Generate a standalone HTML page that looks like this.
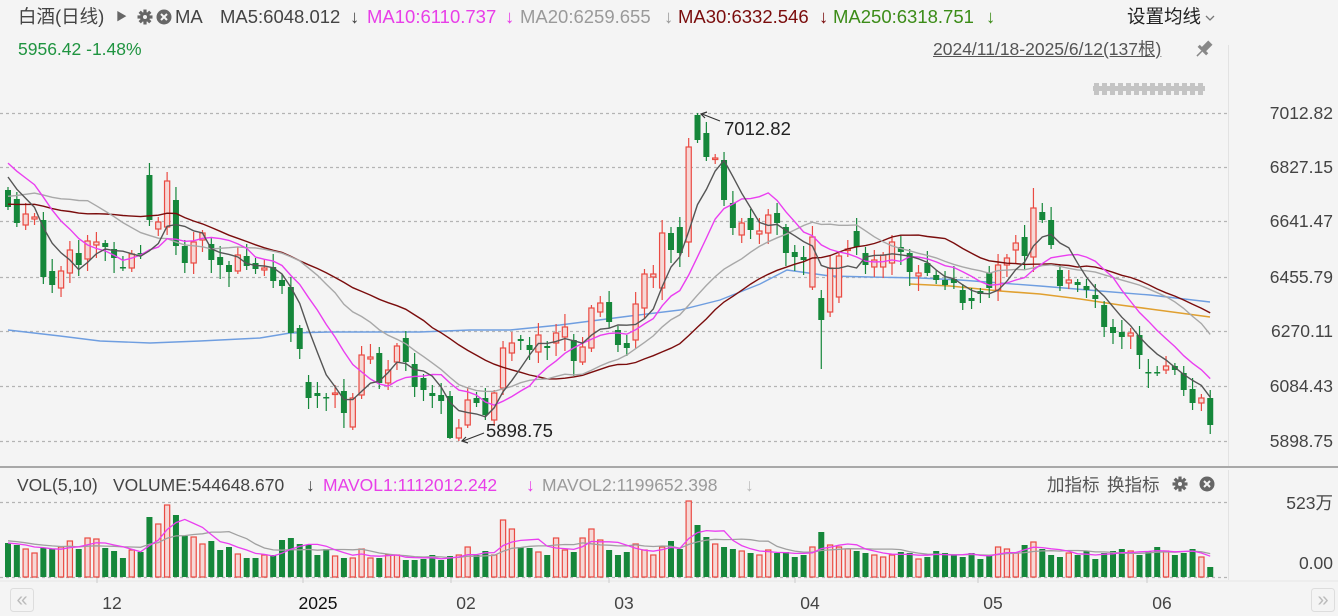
<!DOCTYPE html>
<html><head><meta charset="utf-8">
<style>
html,body{margin:0;padding:0;background:#f4f4f4;}
#w{position:relative;width:1338px;height:616px;overflow:hidden;background:#f4f4f4;font-family:"Liberation Sans","Noto Sans CJK SC",sans-serif;}
.t{position:absolute;white-space:nowrap;font-size:18.5px;line-height:20px;}
svg{position:absolute;left:0;top:0;}
</style></head><body>
<div id="w">
<svg id="s" width="1338" height="616" xmlns="http://www.w3.org/2000/svg"></svg>
<div class="t" style="left:18px;top:7px;color:#444">白酒(日线)</div>
<div class="t" style="left:116px;top:7px;color:#666;font-size:11px">▶</div>
<div class="t" style="left:175px;top:7px;color:#444">MA</div>
<div class="t" style="left:220px;top:7px;color:#444">MA5:6048.012</div>
<div class="t" style="left:350px;top:7px;color:#444">↓</div>
<div class="t" style="left:367px;top:7px;color:#e83ee8">MA10:6110.737</div>
<div class="t" style="left:505px;top:7px;color:#e83ee8">↓</div>
<div class="t" style="left:520px;top:7px;color:#9a9a9a">MA20:6259.655</div>
<div class="t" style="left:664px;top:7px;color:#9a9a9a">↓</div>
<div class="t" style="left:678px;top:7px;color:#7a0c0c">MA30:6332.546</div>
<div class="t" style="left:819px;top:7px;color:#7a0c0c">↓</div>
<div class="t" style="left:833px;top:7px;color:#3c8c18">MA250:6318.751</div>
<div class="t" style="left:986px;top:7px;color:#3c8c18">↓</div>
<div class="t" style="left:1127px;top:7px;color:#222">设置均线</div>
<div class="t" style="left:18px;top:39px;color:#1f9440;font-size:17.5px">5956.42 -1.48%</div>
<div class="t" style="left:933px;top:39px;color:#555;font-size:17.5px;text-decoration:underline">2024/11/18-2025/6/12(137根)</div>
<div class="t" style="left:17px;top:475px;color:#444;font-size:17.5px">VOL(5,10)</div>
<div class="t" style="left:113px;top:475px;color:#444;font-size:17.5px">VOLUME:544648.670</div>
<div class="t" style="left:306px;top:475px;color:#444;font-size:17.5px">↓</div>
<div class="t" style="left:323px;top:475px;color:#e83ee8;font-size:17.5px">MAVOL1:1112012.242</div>
<div class="t" style="left:526px;top:475px;color:#e83ee8;font-size:17.5px">↓</div>
<div class="t" style="left:542px;top:475px;color:#9a9a9a;font-size:17.5px">MAVOL2:1199652.398</div>
<div class="t" style="left:745px;top:475px;color:#bbb;font-size:17.5px">↓</div>
<div class="t" style="left:1047px;top:475px;color:#555;font-size:17.5px">加指标</div>
<div class="t" style="left:1107px;top:475px;color:#555;font-size:17.5px">换指标</div>
</div>
<script>
var S=document.getElementById('s');var h='';
function L(x1,y1,x2,y2,c,w,d){h+='<line x1="'+x1+'" y1="'+y1+'" x2="'+x2+'" y2="'+y2+'" stroke="'+c+'" stroke-width="'+(w||1)+'"'+(d?' stroke-dasharray="'+d+'"':'')+'/>';}
function T(x,y,s,c,sz,a){h+='<text x="'+x+'" y="'+y+'" fill="'+c+'" font-size="'+sz+'" font-family="Liberation Sans,Noto Sans CJK SC,sans-serif"'+(a?' text-anchor="'+a+'"':'')+'>'+s+'</text>';}
var gy=[113,167,221,277,331,386,441],gl=['7012.82','6827.15','6641.47','6455.79','6270.11','6084.43','5898.75'];
for(var i=0;i<7;i++){L(0,gy[i]+.5,1228,gy[i]+.5,'#b4b4b4',1.3,'3,3');T(1333,gy[i]+6,gl[i],'#444',17.5,'end');}
L(1228.5,45,1228.5,466,'#e2e2e2',1);L(1228.5,470,1228.5,580,'#e2e2e2',1);
for(var k=0;k<14;k++){h+='<rect x="'+(1094+k*8)+'" y="83" width="5" height="12" fill="#c4c4c4"/>';}
h+='<rect x="1093" y="86" width="112" height="5" fill="#c4c4c4"/>';
h+='<polyline points="1206,16 1210,20 1214,16" fill="none" stroke="#777" stroke-width="1.3"/>';
var D=[[190,207],[199,223],[225,214],[219,217],[220,277],[271,285],[288,271],[273,250],[253,265],[259,241],[245,242],[243,247],[249,258],[267,268],[268,254],[253,254],[175,220],[229,222],[227,181],[200,246],[246,263],[263,242],[240,233],[244,260],[257,265],[265,272],[271,255],[256,266],[263,269],[270,268],[267,281],[280,286],[287,333],[328,349],[382,398],[393,396],[397,398],[394,393],[391,413],[427,398],[395,355],[359,357],[353,383],[383,370],[362,346],[338,362],[364,387],
[378,390],[393,396],[395,401],[396,438],[438,428],[425,400],[398,403],[398,415],[420,393],[388,348],[353,343],[339,341],[345,350],[352,335],[346,348],[343,333],[337,327],[340,361],[362,347],[348,308],[312,303],[302,322],[330,345],[343,348],[340,304],[308,274],[277,274],[288,233],[233,250],[227,253],[242,147],[115,140],[133,157],[159,158],[160,200],[203,228],[235,223],[218,230],[234,231],[233,215],[213,223],[227,253],[252,257],[257,260],[287,237],[298,320],
[312,268],[297,256],[250,249],[231,247],[253,265],[267,260],[267,255],[263,242],[247,252],[253,272],[276,273],[263,273],[275,280],[280,285],[279,283],[290,303],[298,301],[291,294],[273,288],[290,265],[265,258],[250,243],[237,256],[257,208],[212,220],[220,245],[270,286],[283,280],[282,285],[286,290],[295,299],[305,327],[327,333],[332,337],[336,333],[335,355],[372,373],[372,373],[370,366],[366,370],[373,390],[389,403],[403,398],[398,425]];
var N=D.length,X=function(i){return 8+i*8.84;};
var R='#ea4a42',G='#15873a';
var pre=[217,215,220,218,214,216,219,217,218,245,240,238,242,236,240,243,239,241,237,140,142,146,150,152,156,162,168,172,176];
var C=pre.concat(D.map(function(d){return d[1];}));
function ma(arr,n,off){var p=[];for(var i=0;i<N;i++){var j=i+off,s=0,c=0;for(var k=Math.max(0,j-n+1);k<=j;k++){s+=arr[k];c++;}p.push(X(i).toFixed(1)+','+(s/c).toFixed(1));}return p.join(' ');}
function PL(pts,c,w){h+='<polyline points="'+pts+'" fill="none" stroke="'+c+'" stroke-width="'+(w||1.4)+'"/>';}
PL('8,330 60,336 100,341 150,343 200,341 260,338 290,333 330,332 420,332 470,330 510,330 560,325 630,316 680,310 720,300 760,284 787,270 830,276 870,277 920,278 960,280 1000,283 1040,286 1100,291 1150,295 1210,302','#6f9ee0',1.4);
PL('910,284 950,286 1000,291 1040,294 1080,299 1120,305 1150,309 1180,313 1210,317','#e0a030',1.6);
for(var i=0;i<N;i++){var o=D[i][0],c=D[i][1],x=X(i),up=c<o;var t=Math.min(o,c),b=Math.max(o,c);
var w1=3+((i*37)%11),w2=3+((i*53)%13);var hi=t-w1,lo=b+w2;
if(i==78)hi=113;if(i==51)lo=441;if(i==50)lo=439;if(i==92)lo=369;if(i==77)hi=138;if(i==116)hi=188;if(i==91)hi=226;
var col=up?R:G;L(x,hi,x,t,col,1.2);L(x,b,x,lo,col,1.2);
if(b-t<1.5)b=t+1.5;
if(up)h+='<rect x="'+(x-2.6)+'" y="'+t+'" width="5.2" height="'+(b-t)+'" fill="#f6d8d6" stroke="'+R+'" stroke-width="1.2"/>';
else h+='<rect x="'+(x-3)+'" y="'+t+'" width="6" height="'+(b-t)+'" fill="'+G+'"/>';}
var off=pre.length;
PL(ma(C,30,off),'#7a0c0c');PL(ma(C,20,off),'#a8a8a8');PL(ma(C,10,off),'#ea3ef0');PL(ma(C,5,off),'#555');
T(724,135,'7012.82','#222',18.5);L(720,121,702,114,'#333',1.2);h+='<polyline points="707,112 701,114 705,118" fill="none" stroke="#333" stroke-width="1.2"/>';
T(486,437,'5898.75','#222',18.5);L(484,433,463,441,'#333',1.2);h+='<polyline points="466,437 462,441 468,443" fill="none" stroke="#333" stroke-width="1.2"/>';
function gear(cx,cy,c){for(var a=0;a<8;a++){h+='<rect x="'+(cx-1.6)+'" y="'+(cy-7.5)+'" width="3.2" height="4" fill="'+c+'" transform="rotate('+(a*45)+' '+cx+' '+cy+')"/>';}h+='<circle cx="'+cx+'" cy="'+cy+'" r="5" fill="'+c+'"/><circle cx="'+cx+'" cy="'+cy+'" r="2" fill="#f4f4f4"/>';}
function xc(cx,cy,c){h+='<circle cx="'+cx+'" cy="'+cy+'" r="7.5" fill="'+c+'"/>';L(cx-3,cy-3,cx+3,cy+3,'#f4f4f4',2);L(cx+3,cy-3,cx-3,cy+3,'#f4f4f4',2);}
gear(145,17,'#666');xc(164,17,'#666');gear(1180,484,'#666');xc(1207,484,'#666');
h+='<g transform="rotate(45 1204 49)"><rect x="1201" y="40" width="6" height="10" fill="#888"/><rect x="1198" y="49" width="12" height="3" fill="#888"/><line x1="1204" y1="52" x2="1204" y2="59" stroke="#888" stroke-width="1.5"/></g>';
L(0,467,1338,467,'#a8a8a8',2);
L(0,502.5,1228,502.5,'#b4b4b4',1.2,'3,3');L(0,577.5,1228,577.5,'#b4b4b4',1.2,'3,3');
T(1333,509,'523万','#444',17.5,'end');T(1333,569,'0.00','#444',17.5,'end');
var V=[34,32,28,24,29,28,30,36,28,39,38,29,26,19,27,25,60,53,72,62,41,40,33,36,27,30,23,19,19,22,22,37,39,33,32,22,28,21,19,19,28,19,19,22,22,17,17,18,22,17,21,22,30,22,26,22,57,
48,30,29,25,22,39,27,25,39,48,37,27,22,25,33,27,22,30,36,28,
76,52,40,33,30,28,26,24,22,27,24,25,20,22,30,45,32,30,28,26,24,22,20,
22,25,24,18,20,26,24,22,20,24,18,22,30,28,24,32,35,28,22,20,24,22,26,18,24,26,28,26,22,26,30,26,22,24,28,20,10];
for(var i=0;i<N;i++){var v=V[i]||20,x=X(i),up=D[i][1]<D[i][0];
if(up)h+='<rect x="'+(x-2.6)+'" y="'+(577-v)+'" width="5.2" height="'+v+'" fill="#f6d8d6" stroke="'+R+'" stroke-width="1.2"/>';
else h+='<rect x="'+(x-3)+'" y="'+(577-v)+'" width="6" height="'+v+'" fill="'+G+'"/>';}
var VP=[40,40,38,38,36,36,34,34,32].concat(V);
function vma(n){var p=[];for(var i=0;i<N;i++){var j=i+9,s=0;for(var k=j-n+1;k<=j;k++)s+=VP[k];p.push(X(i).toFixed(1)+','+(577-s/n).toFixed(1));}return p.join(' ');}
PL(vma(10),'#a0a0a0',1.3);PL(vma(5),'#ea3ef0',1.3);
L(0,581,1338,581,'#e6e6e6',1);
var xl=[[112,'12'],[318,'2025'],[466,'02'],[624,'03'],[810,'04'],[993,'05'],[1162,'06']];
for(var i=0;i<xl.length;i++){T(xl[i][0],609,xl[i][1],i==1?'#111':'#444',17.5,'middle');L(xl[i][0]-15,578,xl[i][0]-15,583,'#ccc',1);}
h+='<rect x="10.5" y="588.5" width="23" height="23" rx="3" fill="#f4f4f4" stroke="#ddd"/>';T(22,606,'«','#bbb',20,'middle');
h+='<rect x="1311.5" y="588.5" width="23" height="23" rx="3" fill="#f4f4f4" stroke="#ddd"/>';T(1323,606,'»','#bbb',20,'middle');
S.innerHTML=h;
</script>
</body></html>
